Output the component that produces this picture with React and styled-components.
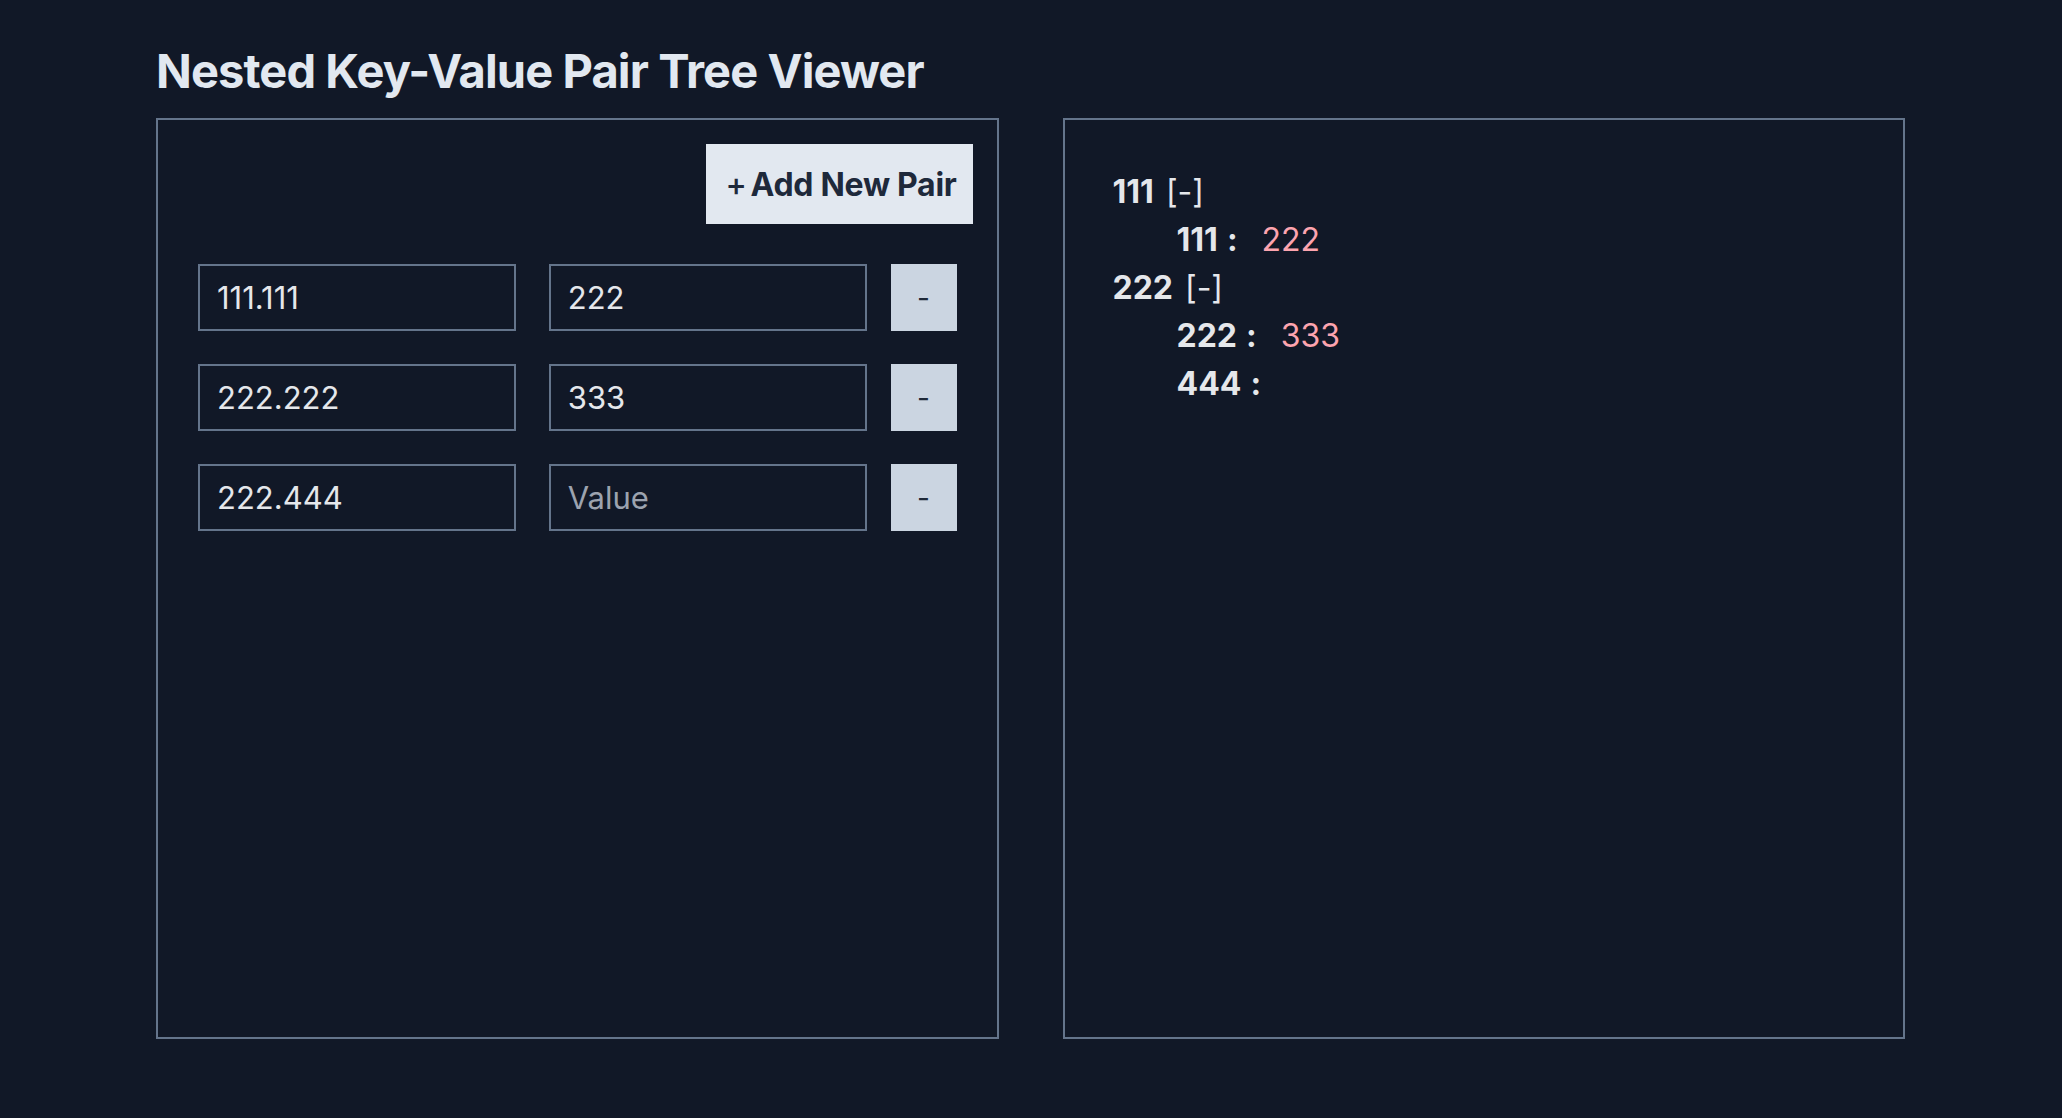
import React, { useState } from "react";
import styled, { createGlobalStyle } from "styled-components";

const GlobalStyle = createGlobalStyle`
  html, body {
    margin: 0;
    padding: 0;
    background: #111827;
    color: #e5e7eb;
    font-family: Inter, "Noto Sans", sans-serif;
  }
  * {
    box-sizing: border-box;
  }
`;

const initialPairs = [
  { key: "111.111", value: "222" },
  { key: "222.222", value: "333" },
  { key: "222.444", value: "" },
];

// turn "a.b" keys into a nested object
const buildTree = (pairs) => {
  const tree = {};
  pairs.forEach(({ key, value }) => {
    if (!key) return;
    const parts = key.split(".");
    let node = tree;
    parts.forEach((part, i) => {
      if (i === parts.length - 1) {
        node[part] = value;
      } else {
        if (typeof node[part] !== "object") node[part] = {};
        node = node[part];
      }
    });
  });
  return tree;
};

const TreeNode = ({ name, data }) => {
  const [open, setOpen] = useState(true);
  if (typeof data === "object") {
    return (
      <div>
        <Line>
          <KeyName>{name}</KeyName>
          <Toggle onClick={() => setOpen(!open)}>{open ? "[-]" : "[+]"}</Toggle>
        </Line>
        {open && (
          <Children>
            {Object.entries(data).map(([k, v]) => (
              <TreeNode key={k} name={k} data={v} />
            ))}
          </Children>
        )}
      </div>
    );
  }
  return (
    <Line>
      <KeyName>{name}</KeyName>
      <Colon>:</Colon>
      <LeafValue>{data}</LeafValue>
    </Line>
  );
};

const App = () => {
  const [pairs, setPairs] = useState(initialPairs);

  const update = (index, field, val) => {
    setPairs(pairs.map((p, i) => (i === index ? { ...p, [field]: val } : p)));
  };

  const tree = buildTree(pairs);

  return (
    <Page>
      <GlobalStyle />
      <Title>Nested Key-Value Pair Tree Viewer</Title>
      <Columns>
        <Panel $pad="24px">
          <Toolbar>
            <AddButton onClick={() => setPairs([...pairs, { key: "", value: "" }])}>
              <span>+</span>Add New Pair
            </AddButton>
          </Toolbar>
          <PairList>
            {pairs.map((p, i) => (
              <PairRow key={i}>
                <Field
                  $space="33px"
                  placeholder="Key"
                  value={p.key}
                  onChange={(e) => update(i, "key", e.target.value)}
                />
                <Field
                  $space="24px"
                  placeholder="Value"
                  value={p.value}
                  onChange={(e) => update(i, "value", e.target.value)}
                />
                <RemoveButton onClick={() => setPairs(pairs.filter((_, j) => j !== i))}>
                  -
                </RemoveButton>
              </PairRow>
            ))}
          </PairList>
        </Panel>
        <Panel $pad="48px">
          {Object.entries(tree).map(([k, v]) => (
            <TreeNode key={k} name={k} data={v} />
          ))}
        </Panel>
      </Columns>
    </Page>
  );
};

const Page = styled.div`
  min-height: 100vh;
  padding: 42px 157px 0 156px;
`;

const Title = styled.h1`
  margin: 0 0 18px 0;
  font-size: 47px;
  line-height: 58px;
  font-weight: 700;
  color: #e2e8f0;
  letter-spacing: -0.9px;
`;

const Columns = styled.div`
  display: grid;
  grid-template-columns: repeat(2, minmax(0, 1fr));
  column-gap: 64px;
`;

const Panel = styled.div`
  height: 921px;
  border: 2px solid #64748b;
  padding: ${(p) => p.$pad};
`;

const Toolbar = styled.div`
  display: flex;
  justify-content: flex-end;
`;

const AddButton = styled.button`
  display: flex;
  align-items: center;
  gap: 4px;
  height: 80px;
  padding: 0 16px 0 20px;
  border: none;
  background: #e2e8f0;
  color: #1e293b;
  font-family: Inter, "Noto Sans", sans-serif;
  font-size: 32px;
  font-weight: 700;
  letter-spacing: -0.3px;
  cursor: pointer;
  span {
    font-weight: 500;
  }
`;

const PairList = styled.div`
  display: flex;
  flex-direction: column;
  gap: 33px;
  margin-top: 40px;
  padding: 0 16px;
`;

const PairRow = styled.div`
  display: flex;
  align-items: stretch;
  height: 67px;
`;

const Field = styled.input`
  flex: 1 1 0;
  width: 0;
  min-width: 0;
  margin-right: ${(p) => p.$space};
  border: 2px solid #64748b;
  background: transparent;
  color: #e5e7eb;
  padding: 0 17px;
  font-family: Inter, "Noto Sans", sans-serif;
  font-size: 31px;
  outline: none;
  &::placeholder {
    color: #9ca3af;
  }
`;

const RemoveButton = styled.button`
  width: 66px;
  flex: none;
  border: none;
  background: #cbd5e1;
  color: #1f2937;
  font-family: Inter, "Noto Sans", sans-serif;
  font-size: 28px;
  cursor: pointer;
`;

const Line = styled.div`
  display: flex;
  align-items: baseline;
  font-size: 32px;
  line-height: 48px;
  white-space: pre;
`;

const KeyName = styled.span`
  font-weight: 700;
  color: #e5e7eb;
`;

const Colon = styled.span`
  margin-left: 9px;
  font-weight: 700;
  color: #e5e7eb;
`;

const Toggle = styled.span`
  margin-left: 12px;
  color: #e5e7eb;
  cursor: pointer;
`;

const LeafValue = styled.span`
  margin-left: 24px;
  color: #fda4af;
`;

const Children = styled.div`
  padding-left: 64px;
`;

export default App;
